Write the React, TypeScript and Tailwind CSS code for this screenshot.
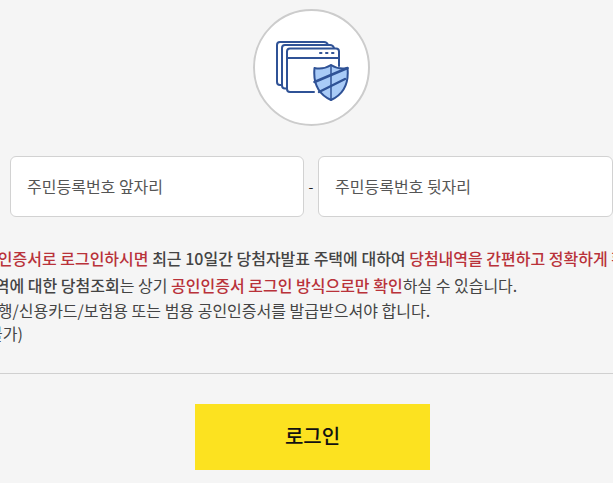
const FONT = '"Noto Sans CJK KR", "Noto Sans", sans-serif';

function CertIcon() {
  return (
    <svg width="73" height="60" viewBox="0 0 73 60" fill="none" stroke="#2f5296" strokeWidth="2" strokeLinejoin="round" strokeLinecap="round">
      <path d="M6 44 H4 Q1 44 1 41 V4 Q1 1 4 1 H48 Q51 1 52 4" />
      <path d="M10.500 47.500 H9 Q6 47.500 6 44.500 V7 Q6 4 9 4 H54 Q57 4 58 7" />
      <path d="M38 51 H14 Q11 51 11 48 V10.500 Q11 7.500 14 7.500 H60 Q63 7.500 63 10.500 V25" />
      <path d="M11 17 H63" />
      <path d="M44 12h1.500M50 12h1.500M56 12h1.500" />
      <path d="M55 24 Q47 29 38.500 27 C37 42 42 53 55 59 C68 53 73 42 71.500 27 Q63 29 55 24 Z" fill="#a9cbf7" />
      <path d="M55 24 V59" strokeWidth="1.500" />
      <path d="M38.500 41 L71.500 27" strokeWidth="2.500" />
      <path d="M43 51 L69 38" strokeWidth="2.500" />
    </svg>
  );
}

export default function App() {
  return (
    <div className="w-[613px] h-[483px] overflow-hidden bg-[#f5f5f5] text-[#444]" style={{ fontFamily: FONT }}>
      <div className="flex justify-center w-[623px] pt-[9px]">
        <div className="flex items-center justify-center w-[117px] h-[117px] pl-[2px] pt-[6px] rounded-full border-2 border-[#cccccc] bg-white">
          <CertIcon />
        </div>
      </div>

      <div className="flex items-center mt-[30px] ml-[10px] w-[640px]">
        <div className="flex items-center w-[294px] h-[61px] pl-[16px] pb-[2px] rounded-md border border-[#d2d2d2] bg-white text-[16px] text-[#555]">
          주민등록번호 앞자리
        </div>
        <div className="w-[14px] text-center text-[14px] text-[#222]">-</div>
        <div className="flex items-center w-[295px] h-[61px] pl-[16px] pb-[2px] rounded-md border border-[#d2d2d2] bg-white text-[16px] text-[#555]">
          주민등록번호 뒷자리
        </div>
      </div>

      <div className="mt-[29px] text-[16px] leading-[24px] whitespace-nowrap">
        <p className="-ml-[17px] font-medium">
          <span className="text-[#b9323a]">공인증서로 로그인하시면</span> 최근 10일간 당첨자발표 주택에 대하여 <span className="text-[#b9323a]">당첨내역을 간편하고 정확하게 확인</span>
        </p>
        <p className="-ml-[20px] mt-[3px]">
          <span className="font-medium">내역에 대한 당첨조회</span>는 상기 <span className="font-medium text-[#b9323a]">공인인증서 로그인 방식으로만 확인</span>하실 수 있습니다.
        </p>
        <p className="-ml-[17px] mt-[1px]">은행/신용카드/보험용 또는 범용 공인인증서를 발급받으셔야 합니다.</p>
        <p className="-ml-[12px] -mt-[1px]">불가)</p>
      </div>

      <hr className="mt-[28px] border-[#d0d0d0]" />

      <div className="flex justify-center w-[625px] mt-[30px]">
        <button className="w-[235px] h-[66px] pb-[2px] bg-[#fce220] text-[20px] font-medium text-[#111]">로그인</button>
      </div>
    </div>
  );
}
